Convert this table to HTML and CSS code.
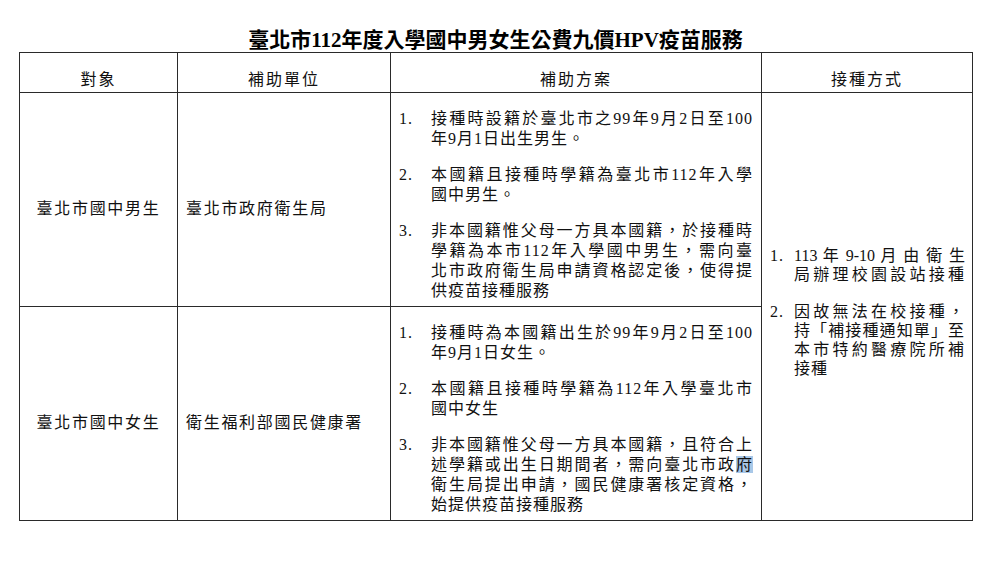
FILE: index.html
```html
<!DOCTYPE html>
<html lang="zh-Hant">
<head>
<meta charset="utf-8">
<title>臺北市112年度入學國中男女生公費九價HPV疫苗服務</title>
<link rel="stylesheet" href="styles.css">
</head>
<body>
<div class="page">
  <h1 class="title">臺北市112年度入學國中男女生公費九價HPV疫苗服務</h1>
  <table class="grid">
    <colgroup>
      <col class="c1"><col class="c2"><col class="c3"><col class="c4">
    </colgroup>
    <thead>
      <tr>
        <th>對象</th>
        <th>補助單位</th>
        <th>補助方案</th>
        <th>接種方式</th>
      </tr>
    </thead>
    <tbody>
      <tr>
        <td class="who">臺北市國中男生</td>
        <td class="org">臺北市政府衛生局</td>
        <td class="plan">
          <ol>
            <li><span class="num">1.</span><div class="txt"><span class="ln">接種時設籍於臺北市之99年9月2日至100</span><span class="ln">年9月1日出生男生。</span></div></li>
            <li><span class="num">2.</span><div class="txt"><span class="ln">本國籍且接種時學籍為臺北市112年入學</span><span class="ln">國中男生。</span></div></li>
            <li><span class="num">3.</span><div class="txt"><span class="ln">非本國籍惟父母一方具本國籍，於接種時</span><span class="ln">學籍為本市112年入學國中男生，需向臺</span><span class="ln">北市政府衛生局申請資格認定後，使得提</span><span class="ln">供疫苗接種服務</span></div></li>
          </ol>
        </td>
        <td class="way" rowspan="2">
          <ol>
            <li><span class="num">1.</span><div class="txt"><span class="ln tight">113 年 9-10 月 由 衛 生</span><span class="ln">局辦理校園設站接種</span></div></li>
            <li><span class="num">2.</span><div class="txt"><span class="ln">因故無法在校接種，</span><span class="ln">持「補接種通知單」至</span><span class="ln">本市特約醫療院所補</span><span class="ln">接種</span></div></li>
          </ol>
        </td>
      </tr>
      <tr>
        <td class="who">臺北市國中女生</td>
        <td class="org">衛生福利部國民健康署</td>
        <td class="plan">
          <ol>
            <li><span class="num">1.</span><div class="txt"><span class="ln">接種時為本國籍出生於99年9月2日至100</span><span class="ln">年9月1日女生。</span></div></li>
            <li><span class="num">2.</span><div class="txt"><span class="ln">本國籍且接種時學籍為112年入學臺北市</span><span class="ln">國中女生</span></div></li>
            <li><span class="num">3.</span><div class="txt"><span class="ln">非本國籍惟父母一方具本國籍，且符合上</span><span class="ln">述學籍或出生日期間者，需向臺北市政<span class="sel">府</span></span><span class="ln">衛生局提出申請，國民健康署核定資格，</span><span class="ln">始提供疫苗接種服務</span></div></li>
          </ol>
        </td>
      </tr>
    </tbody>
  </table>
</div>
</body>
</html>
```

FILE: styles.css
```css
html, body {
  margin: 0;
  padding: 0;
  background: #ffffff;
}

body {
  font-family: "Liberation Serif", "Noto Sans CJK TC", serif;
  color: #111111;
  font-size: 16px;
}

.page {
  margin-left: 19px;
  width: 953px;
}

.title {
  margin: 0;
  padding-top: 28px;
  height: 24px;
  line-height: 24px;
  font-size: 21px;
  font-weight: bold;
  text-align: center;
  color: #000000;
}

.grid {
  border-collapse: collapse;
  table-layout: fixed;
  width: 953px;
}

.c1 { width: 158px; }
.c2 { width: 213px; }
.c3 { width: 371px; }
.c4 { width: 211px; }

.grid th,
.grid td {
  border: 1px solid #2a2a2a;
  padding: 0;
}

.grid th {
  height: 37px;
  vertical-align: bottom;
  padding-bottom: 2px;
  line-height: 20px;
  font-weight: normal;
  font-size: 16px;
  letter-spacing: 2px;
  text-align: center;
}

.grid tbody tr {
  height: 214px;
}

.who {
  text-align: center;
  vertical-align: middle;
  padding-top: 18px !important;
  letter-spacing: 1.7px;
  line-height: 20px;
}

.org {
  vertical-align: middle;
  padding: 18px 0 0 8px !important;
  letter-spacing: 1.7px;
  line-height: 20px;
}

.grid ol {
  list-style: none;
  margin: 0;
  padding: 0;
}

.grid li {
  display: flex;
}

.txt {
  flex: 1;
  min-width: 0;
}

.ln {
  display: block;
  text-align: justify;
  text-align-last: justify;
}

.ln:last-child {
  text-align-last: auto;
}

.plan {
  vertical-align: top;
  padding: 0 8px 5px 8px !important;
  line-height: 20px;
  letter-spacing: 1px;
}

.plan li {
  margin-top: 16px;
}

.plan .num {
  flex: 0 0 32px;
}

.way {
  vertical-align: middle;
  padding: 10px 7px 0 8px !important;
  line-height: 19px;
  letter-spacing: 1px;
}

.way .ln {
  white-space: nowrap;
}

.way .ln.tight {
  letter-spacing: 0;
}

.way .ln:last-child {
  text-align-last: justify;
}

.way li:last-child .ln:last-child {
  text-align-last: auto;
}

.way li + li {
  margin-top: 18px;
}

.way .num {
  flex: 0 0 24px;
}

.sel {
  background: #a9c8e8;
}
```
